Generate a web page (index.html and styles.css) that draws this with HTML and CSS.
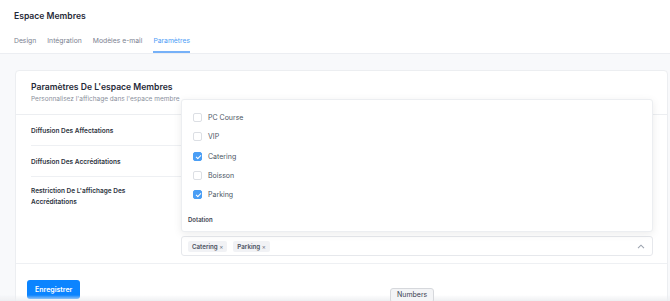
FILE: index.html
```html
<!DOCTYPE html>
<html lang="fr">
<head>
    <meta charset="UTF-8">
    <meta name="viewport" content="width=device-width, initial-scale=1.0">
    <title>Espace Membres</title>
    <link rel="stylesheet" href="styles.css">
</head>
<body>
    <header class="top">
        <h1>Espace Membres</h1>
        <nav class="tabs">
            <a href="#">Design</a>
            <a href="#">Intégration</a>
            <a href="#">Modèles e-mail</a>
            <a href="#" class="active">Paramètres</a>
        </nav>
    </header>

    <main>
        <section class="card">
            <div class="card-head">
                <h2>Paramètres De L'espace Membres</h2>
                <p>Personnalisez l'affichage dans l'espace membre</p>
            </div>

            <div class="card-body">
                <div class="row">
                    <label>Diffusion Des Affectations</label>
                    <div class="control"></div>
                </div>
                <div class="row">
                    <label>Diffusion Des Accréditations</label>
                    <div class="control"></div>
                </div>
                <div class="row last">
                    <label>Restriction De L'affichage Des Accréditations</label>
                    <div class="control">
                        <!-- open dropdown -->
                        <div class="dropdown">
                            <ul class="options">
                                <li><span class="check"></span>PC Course</li>
                                <li><span class="check"></span>VIP</li>
                                <li><span class="check on"></span>Catering</li>
                                <li><span class="check"></span>Boisson</li>
                                <li><span class="check on"></span>Parking</li>
                            </ul>
                            <div class="group-title">Dotation</div>
                        </div>
                        <div class="select">
                            <span class="tag">Catering <b>&times;</b></span>
                            <span class="tag">Parking <b>&times;</b></span>
                            <svg class="chevron" width="8" height="5" viewBox="0 0 8 5"><path d="M1 4.2 4 1.2 7 4.2" fill="none" stroke="#9ca3af" stroke-width="1.1"/></svg>
                        </div>
                    </div>
                </div>
            </div>

            <div class="card-foot">
                <button class="btn">Enregistrer</button>
            </div>
        </section>
    </main>

    <div class="bottom-fade"></div>
    <div class="numbers">Numbers</div>
</body>
</html>
```

FILE: styles.css
```css
* {
    margin: 0;
    padding: 0;
    box-sizing: border-box;
}

body {
    font-family: 'Inter', 'Liberation Sans', sans-serif;
    background-color: #f8f9fb;
    color: #1f2937;
    overflow: hidden;
    height: 301px;
}

/* Header and tabs */
.top {
    background-color: #fff;
    padding: 0 14px;
    border-bottom: 1px solid #eceef2;
}

.top h1 {
    font-size: 8.6px;
    font-weight: 600;
    line-height: 14px;
    padding-top: 9px;
    color: #1f2937;
}

.tabs {
    display: flex;
    gap: 11px;
    margin-top: 12px;
}

.tabs a {
    font-size: 6.8px;
    line-height: 12px;
    color: #7b8190;
    text-decoration: none;
    padding-bottom: 4px;
    border-bottom: 2px solid transparent;
}

.tabs a.active {
    color: #4c9cf6;
    border-bottom-color: #76b1f8;
}

/* Card */
main {
    padding: 16px 2px 0 15px;
}

.card {
    background-color: #fff;
    border: 1px solid #eceef1;
    border-radius: 4px;
}

.card-head {
    padding: 9px 15px 10px;
    border-bottom: 1px solid #eceef1;
}

.card-head h2 {
    font-size: 8.6px;
    font-weight: 600;
    line-height: 14px;
    color: #1f2937;
}

.card-head p {
    font-size: 6.5px;
    line-height: 10px;
    color: #8a909c;
}

.card-body {
    padding: 0 14px 0 15px;
}

.row {
    display: grid;
    grid-template-columns: 150px 1fr;
    align-items: center;
    min-height: 31px;
    border-bottom: 1px solid #eef0f3;
}

.row label {
    font-size: 6.5px;
    font-weight: 600;
    line-height: 11px;
    color: #2d3340;
    padding-right: 40px;
    padding-top: 3px;
}

.row.last {
    align-items: start;
    border-bottom: none;
    padding: 9px 0 7px;
}

.row.last label {
    padding-top: 0;
}

.control {
    position: relative;
}

.row.last .control {
    padding-top: 50px;
}

/* Multi select */
.select {
    display: flex;
    align-items: center;
    gap: 6px;
    height: 20px;
    padding: 0 6px;
    border: 1px solid #e6e8ec;
    border-radius: 3px;
    background-color: #fff;
}

.tag {
    font-size: 6.2px;
    font-weight: 600;
    line-height: 11px;
    color: #4b5160;
    background-color: #f1f2f5;
    border-radius: 2px;
    padding: 0 4px;
}

.tag b {
    font-weight: 400;
    color: #6b7280;
}

.chevron {
    margin-left: auto;
    margin-right: 1px;
}

/* Open dropdown */
.dropdown {
    position: absolute;
    left: 0;
    right: 0;
    bottom: 24px;
    height: 133px;
    background-color: #fff;
    border: 1px solid #eceef1;
    border-radius: 3px;
    box-shadow: 0 2px 8px rgba(0, 0, 0, 0.08);
    padding: 8px 6px 0;
    z-index: 2;
}

.options {
    list-style: none;
}

.options li {
    display: flex;
    align-items: center;
    gap: 6px;
    height: 19.3px;
    padding-left: 5px;
    font-size: 7px;
    color: #4b5563;
}

.check {
    width: 9px;
    height: 9px;
    border: 1px solid #dcdfe4;
    border-radius: 2px;
    background-color: #fff;
    position: relative;
}

.check.on {
    background-color: #4a9ef5;
    border-color: #4a9ef5;
}

.check.on::after {
    content: "";
    position: absolute;
    left: 2.5px;
    top: 1px;
    width: 2px;
    height: 4px;
    border: solid #fff;
    border-width: 0 1px 1px 0;
    transform: rotate(45deg);
}

.group-title {
    font-size: 6px;
    font-weight: 600;
    line-height: 8px;
    color: #3b4150;
    margin-top: 12px;
}

/* Footer */
.card-foot {
    border-top: 1px solid #eef0f3;
    padding: 12px 11px 20px;
}

.btn {
    font-family: inherit;
    font-size: 7px;
    font-weight: 600;
    color: #fff;
    background-color: #0b84ff;
    border: none;
    border-radius: 3px;
    padding: 0 8px;
    height: 19px;
    width: 53px;
}

.bottom-fade {
    position: fixed;
    left: 0;
    right: 0;
    bottom: 0;
    height: 6px;
    background: linear-gradient(to bottom, rgba(240, 241, 243, 0), rgba(236, 237, 240, 0.9));
}

.numbers {
    position: fixed;
    left: 390px;
    bottom: -2px;
    font-size: 7px;
    color: #3b4150;
    background-color: #f3f4f6;
    border: 1px solid #d6d8dc;
    border-radius: 3px;
    padding: 1px 6px 3px;
}
```
